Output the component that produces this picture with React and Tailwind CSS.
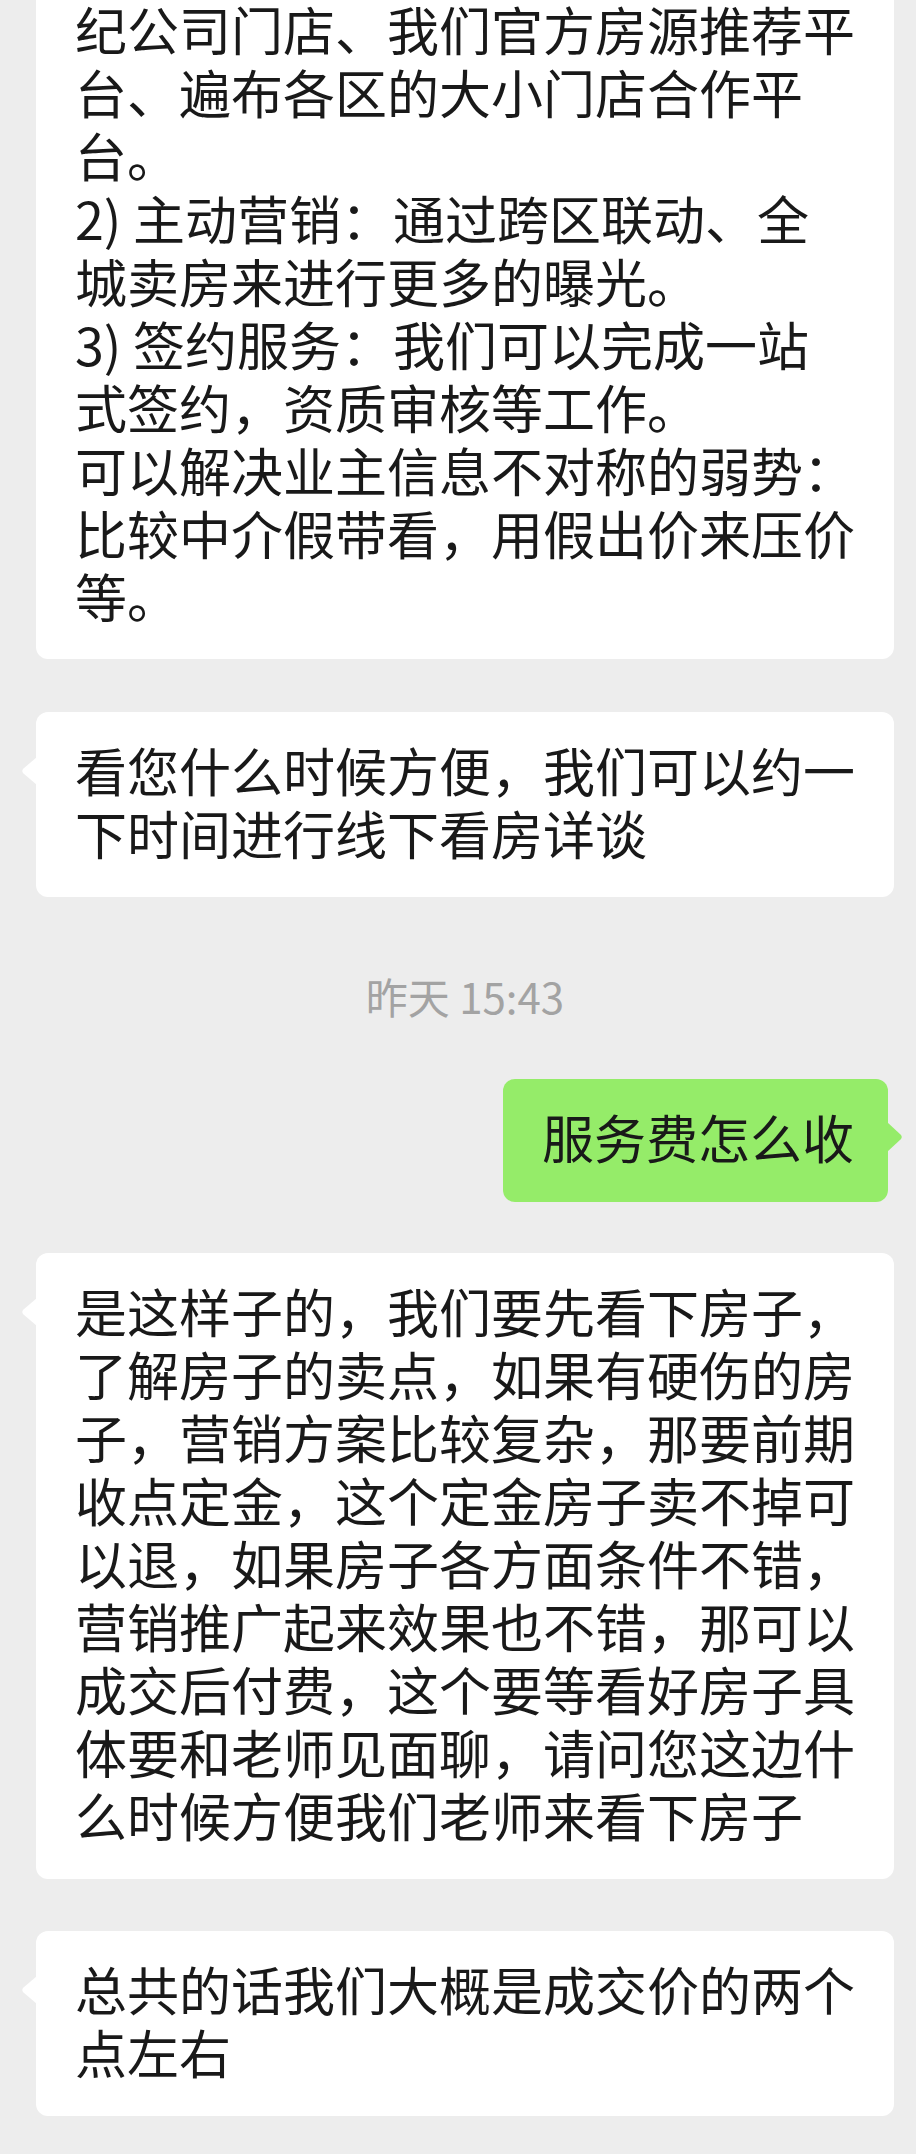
const FONT = { fontFamily: '"Noto Sans CJK SC", "Noto Sans", sans-serif' };

const messages = [
  {
    id: 1,
    side: "left",
    cut: true,
    lines: [
      "纪公司门店、我们官方房源推荐平",
      "台、遍布各区的大小门店合作平",
      "台。",
      "2) 主动营销：通过跨区联动、全",
      "城卖房来进行更多的曝光。",
      "3) 签约服务：我们可以完成一站",
      "式签约，资质审核等工作。",
      "可以解决业主信息不对称的弱势：",
      "比较中介假带看，用假出价来压价",
      "等。",
    ],
  },
  {
    id: 2,
    side: "left",
    lines: ["看您什么时候方便，我们可以约一", "下时间进行线下看房详谈"],
  },
  { id: "t1", time: "昨天 15:43" },
  { id: 3, side: "right", lines: ["服务费怎么收"] },
  {
    id: 4,
    side: "left",
    lines: [
      "是这样子的，我们要先看下房子，",
      "了解房子的卖点，如果有硬伤的房",
      "子，营销方案比较复杂，那要前期",
      "收点定金，这个定金房子卖不掉可",
      "以退，如果房子各方面条件不错，",
      "营销推广起来效果也不错，那可以",
      "成交后付费，这个要等看好房子具",
      "体要和老师见面聊，请问您这边什",
      "么时候方便我们老师来看下房子",
    ],
  },
  {
    id: 5,
    side: "left",
    lines: ["总共的话我们大概是成交价的两个", "点左右"],
  },
];

function Tail({ side }) {
  if (side === "left") {
    return (
      <svg
        className="absolute left-[-15px] top-[45px]"
        width="16"
        height="28"
        viewBox="0 0 16 28"
      >
        <path d="M16 0 L2.5 11.5 Q0 14 2.5 16.5 L16 28 Z" fill="#ffffff" />
      </svg>
    );
  }
  return (
    <svg
      className="absolute right-[-15px] top-[43px]"
      width="16"
      height="30"
      viewBox="0 0 16 30"
    >
      <path d="M0 0 L13.5 12.5 Q16 15 13.5 17.5 L0 30 Z" fill="#95ec69" />
    </svg>
  );
}

function Lines({ lines }) {
  return (
    <div className="pl-[39px] text-[52px] leading-[63px] text-[#191919]">
      {lines.map((line, i) => (
        <div key={i} className="whitespace-nowrap">
          {line}
        </div>
      ))}
    </div>
  );
}

export default function App() {
  return (
    <div
      className="flex h-[2154px] w-full flex-col overflow-hidden bg-[#ededed] pl-[36px] pr-[22px]"
      style={FONT}
    >
      {/* bubble cut off at the top of the screen */}
      <div className="-mt-[3px] pb-[32px] rounded-b-[12px] bg-white">
        <Lines lines={messages[0].lines} />
      </div>

      <div className="mt-[53px] pt-[26px] pb-[33px] relative w-full rounded-[12px] bg-white">
        <Lines lines={messages[1].lines} />
        <Tail side="left" />
      </div>

      <div className="mt-[74px] text-center text-[42px] leading-[50px] text-[#a3a3a3]">
        {messages[2].time}
      </div>

      <div className="mt-[58px] flex flex-col">
        <div className="relative self-end mr-[6px] rounded-[12px] bg-[#95ec69] pr-[34px] pt-[26px] pb-[34px]">
          <Lines lines={messages[3].lines} />
          <Tail side="right" />
        </div>
      </div>

      <div className="mt-[51px] pt-[26px] pb-[33px] relative w-full rounded-[12px] bg-white">
        <Lines lines={messages[4].lines} />
        <Tail side="left" />
      </div>

      <div className="mt-[52px] pt-[26px] pb-[33px] relative w-full rounded-[12px] bg-white">
        <Lines lines={messages[5].lines} />
        <Tail side="left" />
      </div>
    </div>
  );
}
